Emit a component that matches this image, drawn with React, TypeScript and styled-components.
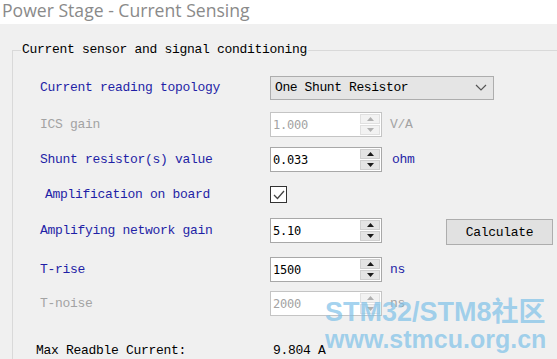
import React from "react";
import styled, { createGlobalStyle } from "styled-components";

const GlobalStyle = createGlobalStyle`
  html, body {
    margin: 0;
    padding: 0;
    background: #f0f0f0;
  }
`;

const BLUE = "#1f1fa6";
const GRAY = "#a3a3a3";

interface SpinProps {
  value: string;
  disabled?: boolean;
}

const Spin: React.FC<SpinProps> = ({ value, disabled }) => (
  <SpinBox $disabled={disabled}>
    <SpinText $disabled={disabled}>{value}</SpinText>
    <SpinCol>
      <SpinBtn $disabled={disabled}>
        <svg width="7" height="4" viewBox="0 0 7 4">
          <polygon points="0,4 7,4 3.5,0" fill={disabled ? "#b0b0b0" : "#1a1a1a"} />
        </svg>
      </SpinBtn>
      <SpinBtn $disabled={disabled}>
        <svg width="7" height="4" viewBox="0 0 7 4">
          <polygon points="0,0 7,0 3.5,4" fill={disabled ? "#b0b0b0" : "#1a1a1a"} />
        </svg>
      </SpinBtn>
    </SpinCol>
  </SpinBox>
);

const App: React.FC = () => {
  return (
    <Page>
      <GlobalStyle />
      <TitleBar>Power Stage - Current Sensing</TitleBar>
      <Content>
        <GroupBox>
          <Legend>Current sensor and signal conditioning</Legend>
          <Rows>
            {/* topology */}
            <Row $gap={17}>
              <Label $color={BLUE}>Current reading topology</Label>
              <Combo>
                <ComboText>One Shunt Resistor</ComboText>
                <svg width="12" height="7" viewBox="0 0 12 7">
                  <polyline points="1,1 6,6 11,1" fill="none" stroke="#555" strokeWidth="1.2" />
                </svg>
              </Combo>
            </Row>

            {/* ICS */}
            <Row $gap={12}>
              <Label $color={GRAY}>ICS gain</Label>
              <Spin value="1.000" disabled />
              <Unit $color={GRAY}>V/A</Unit>
            </Row>

            {/* shunt */}
            <Row $gap={10}>
              <Label $color={BLUE}>Shunt resistor(s) value</Label>
              <Spin value="0.033" />
              <Unit $color={BLUE} $shift={2}>ohm</Unit>
            </Row>

            {/* amplification */}
            <Row $gap={10}>
              <Label $color={BLUE} $pad={9}>Amplification on board</Label>
              <CheckBox>
                <svg width="14" height="14" viewBox="0 0 14 14">
                  <polyline points="2,7 5.5,10.5 12,3" fill="none" stroke="#444" strokeWidth="1.3" />
                </svg>
              </CheckBox>
            </Row>

            <Row $gap={11}>
              <Label $color={BLUE}>Amplifying network gain</Label>
              <Spin value="5.10" />
              <CalcButton>Calculate</CalcButton>
            </Row>

            <Row $gap={14}>
              <Label $color={BLUE}>T-rise</Label>
              <Spin value="1500" />
              <Unit $color={BLUE}>ns</Unit>
            </Row>

            <Row $gap={9}>
              <Label $color={GRAY}>T-noise</Label>
              <Spin value="2000" disabled />
              <Unit $color={GRAY}>ns</Unit>
            </Row>

            <Row $gap={22}>
              <Label $color="#000" $pad={0}>Max Readble Current:</Label>
              <Value>9.804 A</Value>
            </Row>
          </Rows>
        </GroupBox>
      </Content>
      <Watermark>
        <WmTop>STM32/STM8社区</WmTop>
        <WmBottom>www.stmcu.org.cn</WmBottom>
      </Watermark>
    </Page>
  );
};

const Page = styled.div`
  position: relative;
  width: 557px;
  height: 359px;
  overflow: hidden;
  background: #f0f0f0;
`;

const TitleBar = styled.div`
  height: 24px;
  background: #ffffff;
  color: #8a8a8a;
  font-family: "Open Sans", "Noto Sans", sans-serif;
  font-size: 17.6px;
  line-height: 21px;
  padding-left: 2px;
  white-space: nowrap;
`;

const Content = styled.div`
  padding: 18px 0 0 12px;
`;

const GroupBox = styled.fieldset`
  margin: 0;
  padding: 0;
  width: 600px;
  border: 1px solid #d9d9d9;
  min-width: 0;
`;

const Legend = styled.legend`
  margin-left: 8px;
  padding: 0 1px;
  font-family: "Liberation Mono", monospace;
  font-size: 13px;
  letter-spacing: -0.3px;
  line-height: 16px;
  color: #000;
`;

const Rows = styled.div`
  padding: 0 0 40px 23px;
`;

const Row = styled.div<{ $gap: number }>`
  display: flex;
  align-items: center;
  height: 25px;
  margin-top: ${(p) => p.$gap}px;
`;

const Label = styled.div<{ $color: string; $pad?: number }>`
  box-sizing: border-box;
  flex: 0 0 234px;
  padding-left: ${(p) => (p.$pad === undefined ? 4 : p.$pad)}px;
  color: ${(p) => p.$color};
  font-family: "Liberation Mono", monospace;
  font-size: 13px;
  letter-spacing: -0.3px;
  white-space: nowrap;
`;

const Combo = styled.div`
  box-sizing: border-box;
  width: 224px;
  height: 24px;
  display: flex;
  align-items: center;
  justify-content: space-between;
  padding: 0 6px 0 4px;
  background: #e5e5e5;
  border: 1px solid #adadad;
`;

const ComboText = styled.span`
  font-family: "Liberation Mono", monospace;
  font-size: 13px;
  letter-spacing: -0.4px;
  color: #000;
`;

const SpinBox = styled.div<{ $disabled?: boolean }>`
  box-sizing: border-box;
  width: 112px;
  height: 25px;
  display: flex;
  background: #fff;
  border: 1px solid ${(p) => (p.$disabled ? "#c4c4c4" : "#a8a8a8")};
`;

const SpinText = styled.div<{ $disabled?: boolean }>`
  flex: 1;
  display: flex;
  align-items: center;
  padding-left: 2px;
  font-family: "DejaVu Sans Mono", monospace;
  font-size: 12px;
  letter-spacing: -0.2px;
  color: ${(p) => (p.$disabled ? GRAY : "#000")};
`;

const SpinCol = styled.div`
  width: 20px;
  display: flex;
  flex-direction: column;
  gap: 1px;
  padding: 1px 1px 1px 0;
`;

const SpinBtn = styled.div<{ $disabled?: boolean }>`
  flex: 1;
  display: flex;
  align-items: center;
  justify-content: center;
  background: ${(p) => (p.$disabled ? "#f2f2f2" : "#e4e4e4")};
  border: 1px solid ${(p) => (p.$disabled ? "#e0e0e0" : "#cfcfcf")};
`;

const Unit = styled.div<{ $color: string; $shift?: number }>`
  margin-left: ${(p) => 8 + (p.$shift || 0)}px;
  color: ${(p) => p.$color};
  font-family: "Liberation Mono", monospace;
  font-size: 13px;
  letter-spacing: -0.3px;
`;

const CheckBox = styled.div`
  box-sizing: border-box;
  width: 17px;
  height: 17px;
  display: flex;
  align-items: center;
  justify-content: center;
  background: #fff;
  border: 1px solid #333;
`;

const CalcButton = styled.div`
  box-sizing: border-box;
  margin-left: 64px;
  margin-top: 3px;
  width: 107px;
  height: 26px;
  display: flex;
  align-items: center;
  justify-content: center;
  background: #e1e1e1;
  border: 1px solid #adadad;
  font-family: "Liberation Mono", monospace;
  font-size: 13px;
  letter-spacing: -0.3px;
  color: #000;
`;

const Value = styled.div`
  padding-left: 3px;
  font-family: "Liberation Mono", monospace;
  font-size: 13px;
  letter-spacing: -0.3px;
  color: #000;
`;

const Watermark = styled.div`
  position: absolute;
  left: 325px;
  top: 299px;
  display: flex;
  flex-direction: column;
  color: rgba(125, 192, 232, 0.7);
  font-family: "Liberation Sans", "Noto Sans CJK SC", sans-serif;
  font-weight: bold;
  pointer-events: none;
`;

const WmTop = styled.div`
  font-size: 27px;
  line-height: 26px;
  white-space: nowrap;
`;

const WmBottom = styled.div`
  font-size: 25px;
  line-height: 28px;
  white-space: nowrap;
`;

export default App;
